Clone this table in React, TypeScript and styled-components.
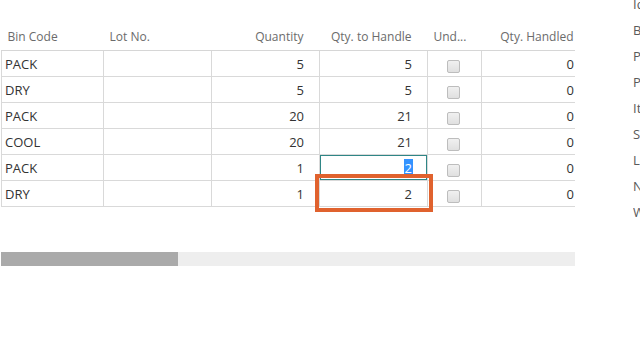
import styled, { createGlobalStyle } from 'styled-components';

type Line = {
  bin: string;
  lot: string;
  qty: number;
  toHandle: number;
  handled: number;
};

const lines: Line[] = [
  { bin: 'PACK', lot: '', qty: 5, toHandle: 5, handled: 0 },
  { bin: 'DRY', lot: '', qty: 5, toHandle: 5, handled: 0 },
  { bin: 'PACK', lot: '', qty: 20, toHandle: 21, handled: 0 },
  { bin: 'COOL', lot: '', qty: 20, toHandle: 21, handled: 0 },
  { bin: 'PACK', lot: '', qty: 1, toHandle: 2, handled: 0 },
  { bin: 'DRY', lot: '', qty: 1, toHandle: 2, handled: 0 },
];

// field labels of the details pane, mostly off screen to the right
const factBox = ['Identifier', 'Bin', 'Place', 'Pick', 'Item', 'Source', 'Lot', 'No.', 'Whse.'];

const ACTIVE_ROW = 4;
const MARKED_ROW = 5;

const App = () => {
  return (
    <>
      <GlobalStyle />
      <Screen>
        <LinesPart>
          <GridWindow>
            <Grid>
              <colgroup>
                <col style={{ width: 102 }} />
                <col style={{ width: 108 }} />
                <col style={{ width: 108 }} />
                <col style={{ width: 108 }} />
                <col style={{ width: 54 }} />
                <col style={{ width: 108 }} />
              </colgroup>
              <thead>
                <tr>
                  <HeadCell>Bin Code</HeadCell>
                  <HeadCell>Lot No.</HeadCell>
                  <HeadCell $right>Quantity</HeadCell>
                  <HeadCell $right>Qty. to Handle</HeadCell>
                  <HeadCell>Und...</HeadCell>
                  <HeadCell $right>Qty. Handled</HeadCell>
                </tr>
              </thead>
              <tbody>
                {lines.map((line, i) => (
                  <tr key={i}>
                    <Cell>{line.bin}</Cell>
                    <Cell>{line.lot}</Cell>
                    <Cell $right>{line.qty}</Cell>
                    {i === ACTIVE_ROW ? (
                      <Cell $right $active>
                        <Selected>{line.toHandle}</Selected>
                      </Cell>
                    ) : (
                      <Cell $right>
                        {line.toHandle}
                        {i === MARKED_ROW && <Marker />}
                      </Cell>
                    )}
                    <Cell $center>
                      <Check />
                    </Cell>
                    <Cell $right>{line.handled}</Cell>
                  </tr>
                ))}
              </tbody>
            </Grid>
          </GridWindow>
          <ScrollTrack>
            <ScrollThumb />
          </ScrollTrack>
        </LinesPart>
        <FactPane>
          {factBox.map((label) => (
            <FactLabel key={label}>{label}</FactLabel>
          ))}
        </FactPane>
      </Screen>
    </>
  );
};

const GlobalStyle = createGlobalStyle`
  html, body {
    margin: 0;
    padding: 0;
    background: #ffffff;
    overflow: hidden;
  }
  body {
    font-family: "Segoe UI", "Open Sans", "Noto Sans", sans-serif;
  }
`;

const Screen = styled.div`
  width: 640px;
  height: 360px;
  display: flex;
  overflow: hidden;
`;

const LinesPart = styled.div`
  width: 575px;
  flex-shrink: 0;
  padding-top: 22px;
`;

const GridWindow = styled.div`
  width: 574px;
  margin-left: 1px;
  padding-bottom: 8px;
  overflow: hidden;
`;

const Grid = styled.table`
  border-collapse: collapse;
  table-layout: fixed;
  width: 588px;
`;

const HeadCell = styled.th<{ $right?: boolean }>`
  height: 28px;
  padding: 0 16px 0 6px;
  font-size: 12px;
  font-weight: 400;
  color: #6b6b6b;
  text-align: ${(p) => (p.$right ? 'right' : 'left')};
  white-space: nowrap;
  overflow: hidden;
  border-bottom: 1px solid #d6d6d6;
`;

const Cell = styled.td<{ $right?: boolean; $center?: boolean; $active?: boolean }>`
  position: relative;
  height: 26px;
  padding: 0 16px 0 3px;
  font-size: 13px;
  color: #333333;
  text-align: ${(p) => (p.$right ? 'right' : p.$center ? 'center' : 'left')};
  border: 1px solid #d9d9d9;
  border-top: none;
  white-space: nowrap;
  box-sizing: border-box;
  ${(p) => (p.$right ? 'padding-right: 15px;' : '')}
  ${(p) => (p.$center ? 'padding: 0 2px 0 0;' : '')}
  ${(p) => (p.$active ? 'box-shadow: inset 0 0 0 1px #2f8686;' : '')}
`;

const Selected = styled.span`
  display: inline-block;
  background: #3393ff;
  color: #ffffff;
  line-height: 18px;
  padding: 0 1px;
  margin-right: -1px;
`;

const Check = styled.span`
  display: inline-block;
  width: 11px;
  height: 11px;
  margin-top: 2px;
  vertical-align: middle;
  border: 1px solid #bdbdbd;
  border-radius: 2px;
  background: linear-gradient(#f0f0f0, #e0e0e0);
`;

// annotation frame drawn over the cell
const Marker = styled.span`
  position: absolute;
  left: -5px;
  top: -7px;
  width: 110px;
  height: 30px;
  border: 4px solid #e0622e;
  pointer-events: none;
`;

const ScrollTrack = styled.div`
  margin: 37px 0 0 1px;
  width: 574px;
  height: 14px;
  background: #eeeeee;
  display: flex;
`;

const ScrollThumb = styled.div`
  width: 177px;
  background: #aaaaaa;
`;

const FactPane = styled.div`
  width: 7px;
  margin-left: 58px;
  margin-top: -9px;
  display: flex;
  flex-direction: column;
  white-space: nowrap;
  overflow: hidden;
`;

const FactLabel = styled.div`
  height: 26px;
  line-height: 26px;
  font-size: 13px;
  color: #5a5a5a;
`;

export default App;
